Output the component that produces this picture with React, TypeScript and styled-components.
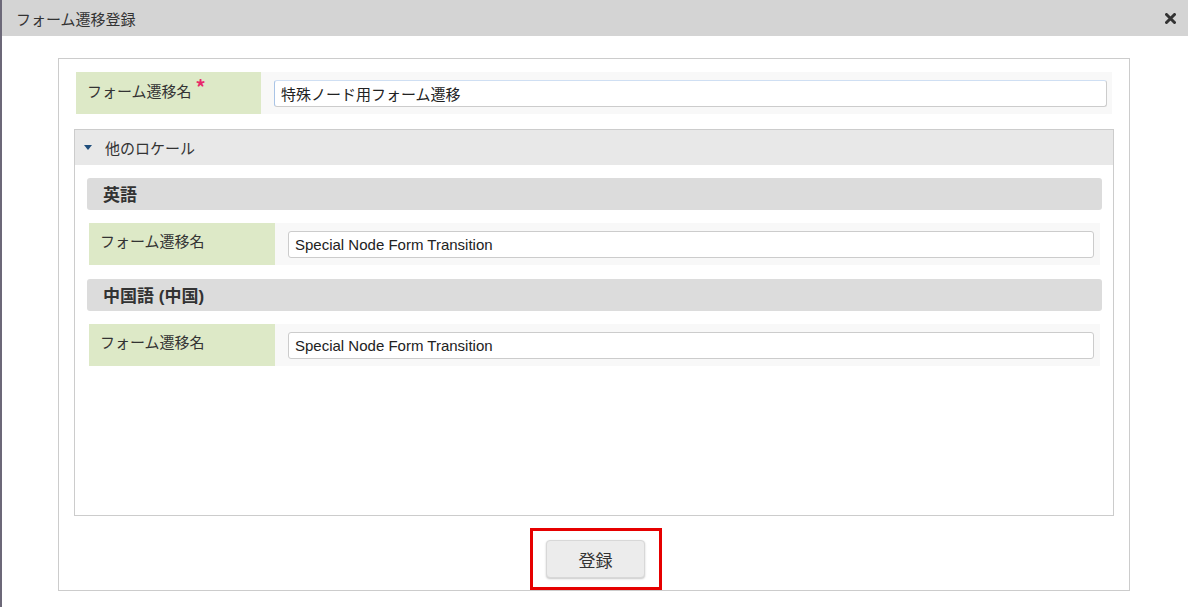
import styled, { createGlobalStyle } from "styled-components";

const GlobalStyle = createGlobalStyle`
  html, body {
    margin: 0;
    padding: 0;
    background: #ffffff;
  }
  body {
    font-family: "Liberation Sans", "Noto Sans CJK JP", sans-serif;
    font-size: 15px;
    color: #333333;
  }
`;

const Dialog = styled.div`
  width: 1188px;
  height: 607px;
  box-sizing: border-box;
  border-left: 2px solid #6c6878;
  display: flex;
  flex-direction: column;
  overflow: hidden;
`;

const TitleBar = styled.div`
  height: 36px;
  flex-shrink: 0;
  background: #d4d4d4;
  display: flex;
  align-items: center;
  justify-content: space-between;
  padding: 0 11px 0 14px;
`;

const Title = styled.span`
  font-family: "Noto Sans CJK JP", sans-serif;
  font-size: 15px;
  color: #333333;
`;

const CloseButton = styled.button`
  border: none;
  background: none;
  padding: 0;
  width: 14px;
  height: 14px;
  display: flex;
  align-items: center;
  justify-content: center;
  cursor: pointer;
`;

const Body = styled.div`
  padding: 22px 58px 0 56px;
`;

const Panel = styled.div`
  height: 533px;
  box-sizing: border-box;
  border: 1px solid #cccccc;
  padding: 13px 15px 0 15px;
  display: flex;
  flex-direction: column;
`;

const FieldRow = styled.div<{ $inset?: number }>`
  display: flex;
  height: 42px;
  margin: 0 ${(p) => p.$inset ?? 0}px 0 ${(p) => p.$inset ?? 0}px;
`;

const Label = styled.div<{ $width: number }>`
  width: ${(p) => p.$width}px;
  flex-shrink: 0;
  background: #dde9c7;
  box-sizing: border-box;
  padding: 7px 11px 0 11px;
  font-family: "Noto Sans CJK JP", sans-serif;
  font-size: 15px;
  color: #333333;
`;

const Required = styled.span`
  color: #e8286a;
  font-size: 20px;
  font-weight: bold;
  position: relative;
  top: -2px;
  margin-left: 4px;
  line-height: 1;
`;

const InputCell = styled.div<{ $right: number }>`
  flex: 1;
  background: #f8f8f8;
  padding: 8px ${(p) => p.$right}px 0 13px;
`;

const TextInput = styled.input<{ $focus?: boolean }>`
  width: 100%;
  height: 27px;
  box-sizing: border-box;
  border: 1px solid #cccccc;
  border-left-color: ${(p) => (p.$focus ? "#a9c4e6" : "#cccccc")};
  border-top-color: ${(p) => (p.$focus ? "#cfdff3" : "#cccccc")};
  border-radius: 3px;
  background: #ffffff;
  padding: 0 6px;
  font-family: "Liberation Sans", "Noto Sans CJK JP", sans-serif;
  font-size: 15px;
  color: #222222;
  outline: none;
`;

const Accordion = styled.div`
  margin-top: 15px;
  height: 389px;
  box-sizing: border-box;
  border: 1px solid #cccccc;
  display: flex;
  flex-direction: column;
`;

const AccordionHeader = styled.div`
  height: 35px;
  background: #e8e8e8;
  display: flex;
  align-items: center;
  padding-left: 9px;
  gap: 13px;
  font-family: "Noto Sans CJK JP", sans-serif;
  font-size: 15px;
  color: #333333;
`;

const Caret = styled.span`
  width: 0;
  height: 0;
  border-left: 4px solid transparent;
  border-right: 4px solid transparent;
  border-top: 5px solid #1e4d7b;
  margin-top: 1px;
`;

const AccordionBody = styled.div`
  padding: 13px 11px 0 12px;
  display: flex;
  flex-direction: column;
`;

const LocaleHeading = styled.div<{ $gap: number }>`
  height: 32px;
  margin-top: ${(p) => p.$gap}px;
  margin-bottom: 13px;
  background: #dcdcdc;
  border-radius: 3px;
  display: flex;
  align-items: center;
  padding-left: 16px;
  font-family: "Liberation Sans", "Noto Sans CJK JP", sans-serif;
  font-weight: bold;
  font-size: 17px;
  color: #333333;
`;

const Footer = styled.div`
  display: flex;
  justify-content: center;
  padding-top: 12px;
  padding-left: 3px;
`;

const Highlight = styled.div`
  width: 132px;
  height: 62px;
  box-sizing: border-box;
  border: 3px solid #e60000;
  display: flex;
  align-items: center;
  justify-content: center;
`;

const SubmitButton = styled.button`
  width: 99px;
  height: 38px;
  border: 1px solid #d8d8d8;
  border-radius: 4px;
  background: #ececec;
  box-shadow: 0 1px 2px rgba(0, 0, 0, 0.22);
  font-family: "Noto Sans CJK JP", sans-serif;
  font-size: 17px;
  color: #333333;
  cursor: pointer;
`;

const locales = [
  { name: "英語", value: "Special Node Form Transition", gap: 0 },
  { name: "中国語 (中国)", value: "Special Node Form Transition", gap: 14 },
];

export default function App() {
  return (
    <>
      <GlobalStyle />
      <Dialog>
        <TitleBar>
          <Title>フォーム遷移登録</Title>
          <CloseButton aria-label="close">
            <svg width="11" height="11" viewBox="0 0 11 11">
              <path d="M1.5 1.5 L9.5 9.5 M9.5 1.5 L1.5 9.5" stroke="#333" strokeWidth="3" strokeLinecap="round" />
            </svg>
          </CloseButton>
        </TitleBar>
        <Body>
          <Panel>
            <FieldRow $inset={2}>
              <Label $width={185}>
                フォーム遷移名<Required>*</Required>
              </Label>
              <InputCell $right={5}>
                <TextInput $focus defaultValue="特殊ノード用フォーム遷移" />
              </InputCell>
            </FieldRow>
            <Accordion>
              <AccordionHeader>
                <Caret />
                他のロケール
              </AccordionHeader>
              <AccordionBody>
                {locales.map((l) => (
                  <div key={l.name}>
                    <LocaleHeading $gap={l.gap}>{l.name}</LocaleHeading>
                    <FieldRow $inset={2}>
                      <Label $width={186}>フォーム遷移名</Label>
                      <InputCell $right={6}>
                        <TextInput defaultValue={l.value} />
                      </InputCell>
                    </FieldRow>
                  </div>
                ))}
              </AccordionBody>
            </Accordion>
            <Footer>
              <Highlight>
                <SubmitButton>登録</SubmitButton>
              </Highlight>
            </Footer>
          </Panel>
        </Body>
      </Dialog>
    </>
  );
}
